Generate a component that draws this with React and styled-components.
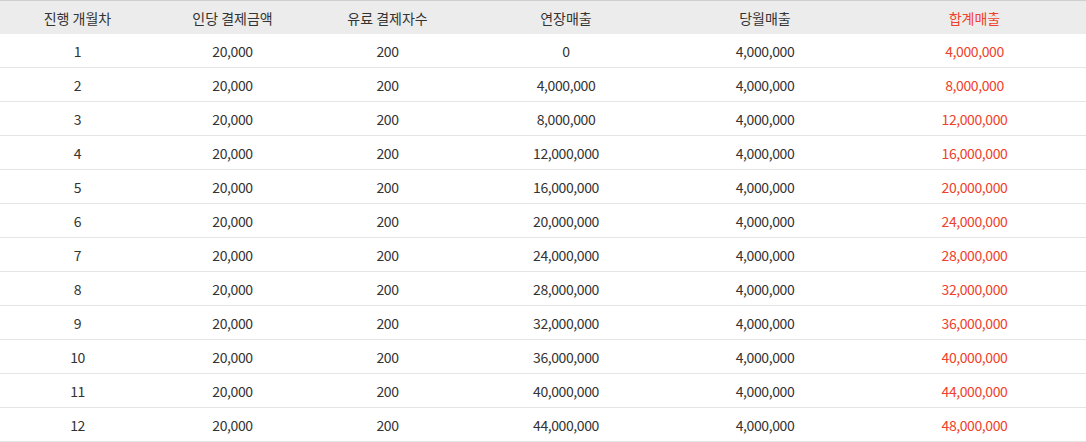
import styled, { createGlobalStyle } from "styled-components";

const GlobalStyle = createGlobalStyle`
  html, body { margin: 0; padding: 0; background: #fff; }
  body { font-family: "Noto Sans CJK KR", "Noto Sans", sans-serif; }
`;

const Table = styled.table`
  width: 1086px;
  border-collapse: collapse;
  table-layout: fixed;
  border-top: 1px solid #cfcfcf;
  font-size: 14px;
  color: #333;
`;

const HeadCell = styled.th`
  height: 33px;
  padding: 0;
  background: #ececec;
  font-weight: 400;
  text-align: center;
  color: ${(p) => (p.$accent ? "#f0412a" : "#333")};
`;

const Row = styled.tr`
  border-bottom: 1px solid #e5e5e5;
`;

const Cell = styled.td`
  height: 33px;
  padding: 0;
  text-align: center;
  letter-spacing: -0.4px;
  color: ${(p) => (p.$accent ? "#f0412a" : "#333")};
`;

const cols = [
  { label: "진행 개월차", width: 155 },
  { label: "인당 결제금액", width: 155 },
  { label: "유료 결제자수", width: 155 },
  { label: "연장매출", width: 202 },
  { label: "당월매출", width: 196 },
  { label: "합계매출", width: 223, accent: true },
];

const fmt = (n) => n.toLocaleString("en-US");

const rows = Array.from({ length: 12 }, (_, i) => {
  const month = i + 1;
  const prev = i * 4000000;
  return [month, fmt(20000), 200, fmt(prev), fmt(4000000), fmt(prev + 4000000)];
});

export default function App() {
  return (
    <>
      <GlobalStyle />
      <Table>
        <colgroup>
          {cols.map((c) => (
            <col key={c.label} style={{ width: c.width }} />
          ))}
        </colgroup>
        <thead>
          <tr>
            {cols.map((c) => (
              <HeadCell key={c.label} $accent={c.accent}>
                {c.label}
              </HeadCell>
            ))}
          </tr>
        </thead>
        <tbody>
          {rows.map((r) => (
            <Row key={r[0]}>
              {r.map((v, j) => (
                <Cell key={j} $accent={cols[j].accent}>
                  {v}
                </Cell>
              ))}
            </Row>
          ))}
        </tbody>
      </Table>
    </>
  );
}
